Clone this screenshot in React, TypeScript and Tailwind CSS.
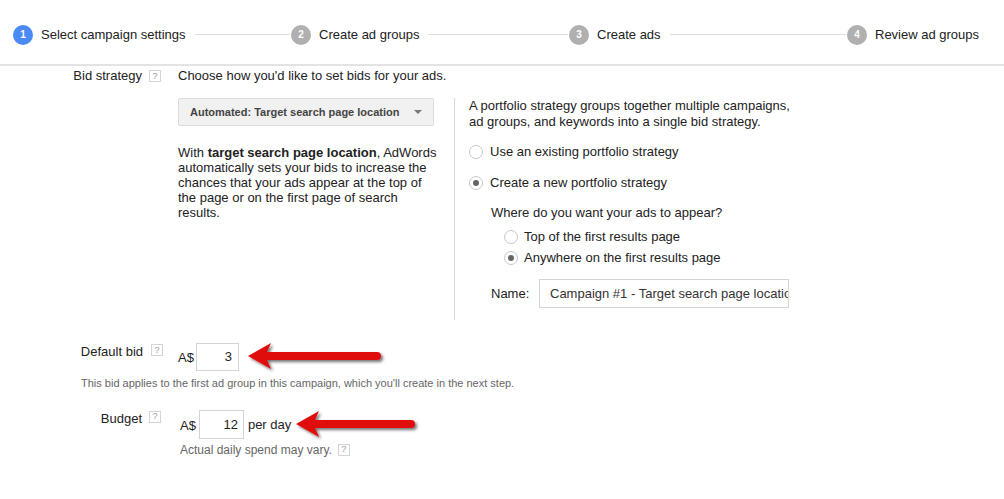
import React from "react";

const font = { fontFamily: '"Liberation Sans", Arial, sans-serif' };

function Help({ className = "" }: { className?: string }) {
  return (
    <span
      className={`inline-flex h-[12px] w-[12px] items-center justify-center border border-[#d4d4d4] bg-white text-[9px] leading-none text-[#999] ${className}`}
    >
      ?
    </span>
  );
}

function Radio({ checked }: { checked?: boolean }) {
  return (
    <span className="inline-flex h-[14px] w-[14px] shrink-0 items-center justify-center rounded-full border border-[#c8c8c8] bg-white">
      {checked && <span className="h-[6px] w-[6px] rounded-full bg-[#666]" />}
    </span>
  );
}

function Arrow({ width }: { width: number }) {
  return (
    <svg width={width + 6} height="30" viewBox={`0 0 ${width + 6} 30`} className="overflow-visible">
      <defs>
        <filter id={`sh${width}`} x="-10%" y="-40%" width="130%" height="200%">
          <feDropShadow dx="2" dy="2" stdDeviation="1.5" floodColor="#000" floodOpacity="0.55" />
        </filter>
      </defs>
      <g filter={`url(#sh${width})`}>
        <path
          d={`M0 13 L23 0 L19 9 L${width - 4} 9 Q${width} 9 ${width} 13 Q${width} 17 ${width - 4} 17 L19 17 L23 26 Z`}
          fill="#e00d0d"
        />
      </g>
    </svg>
  );
}

function Step({ n, label, active, last }: { n: number; label: string; active?: boolean; last?: boolean }) {
  return (
    <div className={`flex items-center ${last ? "shrink-0" : "w-[278px] shrink-0"}`}>
      <span
        className={`flex h-[20px] w-[20px] shrink-0 items-center justify-center rounded-full text-[10px] font-bold text-white ${active ? "bg-[#4a8af4]" : "bg-[#b0b0b0]"}`}
      >
        {n}
      </span>
      <span className="ml-[8px] shrink-0 text-[13px] text-[#222]">{label}</span>
      {!last && <div className="ml-[9px] mr-[1px] h-px flex-1 bg-[#dcdcdc]" />}
    </div>
  );
}

export default function App() {
  return (
    <div className="h-[499px] w-[1004px] overflow-hidden bg-white text-[#222]" style={font}>
      {/* Steps */}
      <div className="flex h-[66px] items-center border-b-2 border-[#e3e3e3] pl-[13px] pt-[5px]">
        <Step n={1} label="Select campaign settings" active />
        <Step n={2} label="Create ad groups" />
        <Step n={3} label="Create ads" />
        <Step n={4} label="Review ad groups" last />
      </div>

      {/* Bid strategy */}
      <div className="flex pt-[2px] text-[13px]">
        <div className="flex w-[178px] shrink-0 items-start justify-end pr-[17px] leading-[16px]">
          <span className="mr-[7px]">Bid strategy</span>
          <Help className="mt-[2px]" />
        </div>
        <div className="flex flex-col">
          <div className="leading-[16px]">Choose how you'd like to set bids for your ads.</div>
          <div className="mt-[14px] flex">
            <div className="w-[276px] shrink-0">
              <div className="flex h-[28px] w-[256px] items-center justify-between rounded-[2px] border border-[#dcdcdc] bg-[#f1f1f1] pl-[11px] pr-[11px]">
                <span className="whitespace-nowrap text-[11px] font-bold text-[#444]">Automated: Target search page location</span>
                <span className="h-0 w-0 border-x-[4px] border-t-[4px] border-x-transparent border-t-[#777]" />
              </div>
              <p className="mt-[19px] w-[262px] leading-[15px]">
                With <b>target search page location</b>, AdWords automatically sets your bids to increase the chances that
                your ads appear at the top of the page or on the first page of search results.
              </p>
            </div>
            <div className="h-[222px] border-l border-[#d8d8d8] pl-[14px]">
              <p className="w-[326px] leading-[16px]">
                A portfolio strategy groups together multiple campaigns, ad groups, and keywords into a single bid strategy.
              </p>
              <div className="mt-[14px] flex items-center gap-[7px] leading-[16px]">
                <Radio />
                <span>Use an existing portfolio strategy</span>
              </div>
              <div className="mt-[15px] flex items-center gap-[7px] leading-[16px]">
                <Radio checked />
                <span>Create a new portfolio strategy</span>
              </div>
              <div className="ml-[22px] mt-[14px]">
                <div className="leading-[16px]">Where do you want your ads to appear?</div>
                <div className="ml-[13px] mt-[8px] flex items-center gap-[6px] leading-[16px]">
                  <Radio />
                  <span>Top of the first results page</span>
                </div>
                <div className="ml-[13px] mt-[5px] flex items-center gap-[6px] leading-[16px]">
                  <Radio checked />
                  <span>Anywhere on the first results page</span>
                </div>
                <div className="mt-[13px] flex items-center">
                  <span className="w-[48px]">Name:</span>
                  <div className="flex h-[29px] w-[250px] items-center overflow-hidden whitespace-nowrap border border-[#d4d4d4] pl-[10px] text-[#333]">
                    Campaign #1 - Target search page location
                  </div>
                </div>
              </div>
            </div>
          </div>
        </div>
      </div>

      {/* Default bid */}
      <div className="mt-[21px] flex text-[13px]">
        <div className="flex w-[178px] shrink-0 items-start justify-end pr-[15px] pt-[1px]">
          <span className="mr-[8px]">Default bid</span>
          <Help className="mt-[2px]" />
        </div>
        <div className="flex items-center">
          <span className="mr-[2px] mt-[1px]">A$</span>
          <div className="flex h-[28px] w-[43px] items-center justify-end border border-[#d4d4d4] pr-[6px]">3</div>
          <span className="ml-[9px] mt-[2px]">
            <Arrow width={133} />
          </span>
        </div>
      </div>
      <div className="mt-[2px] pl-[81px] text-[11px] text-[#666]">
        This bid applies to the first ad group in this campaign, which you'll create in the next step.
      </div>

      {/* Budget */}
      <div className="mt-[17px] flex text-[13px]">
        <div className="flex w-[180px] shrink-0 items-start justify-end pr-[19px]">
          <span className="mr-[7px]">Budget</span>
          <Help className="mt-[2px]" />
        </div>
        <div className="flex flex-col">
          <div className="flex items-center">
            <span className="mr-[3px] mt-[2px]">A$</span>
            <div className="flex h-[29px] w-[45px] items-center justify-end border border-[#d4d4d4] pr-[5px]">12</div>
            <span className="ml-[4px]">per day</span>
            <span className="ml-[5px] mt-[2px]">
              <Arrow width={119} />
            </span>
          </div>
          <div className="flex items-center text-[12px] text-[#666]">
            Actual daily spend may vary.
            <Help className="ml-[6px]" />
          </div>
        </div>
      </div>
    </div>
  );
}
